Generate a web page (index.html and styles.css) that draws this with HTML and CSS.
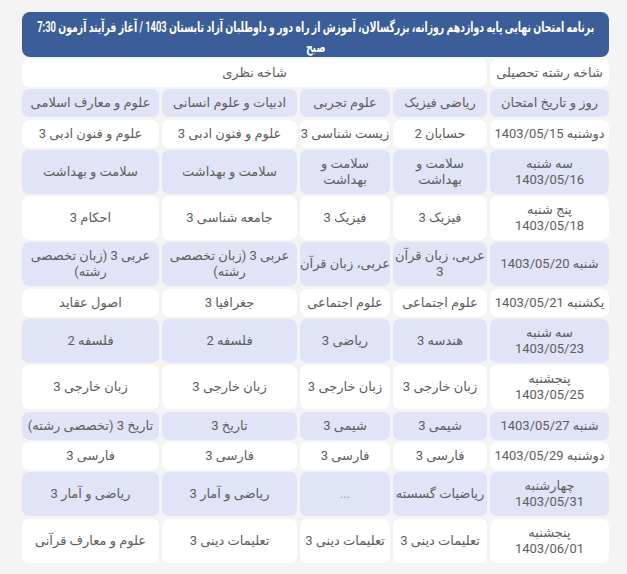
FILE: index.html
```html
<!DOCTYPE html>
<html lang="fa" dir="rtl">
<head>
<meta charset="utf-8">
<title>برنامه امتحان نهایی</title>
<link rel="stylesheet" href="styles.css">
</head>
<body>
<div class="wrap">
  <div class="title">
    <span class="tline">برنامه امتحان نهایی پایه دوازدهم روزانه، بزرگسالان، آموزش از راه دور و داوطلبان آزاد تابستان 1403 / آغاز فرآیند آزمون 7:30</span>
    <span class="tline">صبح</span>
  </div>
  <div class="grid">
    <div class="cell w">شاخه رشته تحصیلی</div>
    <div class="cell w span4">شاخه نظری</div>

    <div class="cell p">روز و تاریخ امتحان</div>
    <div class="cell p">ریاضی فیزیک</div>
    <div class="cell p">علوم تجربی</div>
    <div class="cell p">ادبیات و علوم انسانی</div>
    <div class="cell p">علوم و معارف اسلامی</div>

    <div class="cell w">دوشنبه 1403/05/15</div>
    <div class="cell w">حسابان 2</div>
    <div class="cell w">زیست شناسی 3</div>
    <div class="cell w">علوم و فنون ادبی 3</div>
    <div class="cell w">علوم و فنون ادبی 3</div>

    <div class="cell p">سه شنبه<br>1403/05/16</div>
    <div class="cell p">سلامت و<br>بهداشت</div>
    <div class="cell p">سلامت و<br>بهداشت</div>
    <div class="cell p">سلامت و بهداشت</div>
    <div class="cell p">سلامت و بهداشت</div>

    <div class="cell w">پنج شنبه<br>1403/05/18</div>
    <div class="cell w">فیزیک 3</div>
    <div class="cell w">فیزیک 3</div>
    <div class="cell w">جامعه شناسی 3</div>
    <div class="cell w">احکام 3</div>

    <div class="cell p">شنبه 1403/05/20</div>
    <div class="cell p">عربی، زبان قرآن<br>3</div>
    <div class="cell p">عربی، زبان قرآن</div>
    <div class="cell p">عربی 3 (زبان تخصصی<br>رشته)</div>
    <div class="cell p">عربی 3 (زبان تخصصی<br>رشته)</div>

    <div class="cell w">یکشنبه 1403/05/21</div>
    <div class="cell w">علوم اجتماعی</div>
    <div class="cell w">علوم اجتماعی</div>
    <div class="cell w">جغرافیا 3</div>
    <div class="cell w">اصول عقاید</div>

    <div class="cell p">سه شنبه<br>1403/05/23</div>
    <div class="cell p">هندسه 3</div>
    <div class="cell p">ریاضی 3</div>
    <div class="cell p">فلسفه 2</div>
    <div class="cell p">فلسفه 2</div>

    <div class="cell w">پنجشنبه<br>1403/05/25</div>
    <div class="cell w">زبان خارجی 3</div>
    <div class="cell w">زبان خارجی 3</div>
    <div class="cell w">زبان خارجی 3</div>
    <div class="cell w">زبان خارجی 3</div>

    <div class="cell p">شنبه 1403/05/27</div>
    <div class="cell p">شیمی 3</div>
    <div class="cell p">شیمی 3</div>
    <div class="cell p">تاریخ 3</div>
    <div class="cell p">تاریخ 3 (تخصصی رشته)</div>

    <div class="cell w">دوشنبه 1403/05/29</div>
    <div class="cell w">فارسی 3</div>
    <div class="cell w">فارسی 3</div>
    <div class="cell w">فارسی 3</div>
    <div class="cell w">فارسی 3</div>

    <div class="cell p">چهارشنبه<br>1403/05/31</div>
    <div class="cell p">ریاضیات گسسته</div>
    <div class="cell p muted">...</div>
    <div class="cell p">ریاضی و آمار 3</div>
    <div class="cell p">ریاضی و آمار 3</div>

    <div class="cell w">پنجشنبه<br>1403/06/01</div>
    <div class="cell w">تعلیمات دینی 3</div>
    <div class="cell w">تعلیمات دینی 3</div>
    <div class="cell w">تعلیمات دینی 3</div>
    <div class="cell w">علوم و معارف قرآنی</div>
  </div>
</div>
</body>
</html>
```

FILE: styles.css
```css
html, body {
  margin: 0;
  padding: 0;
  background: #f4f4f5;
}
body {
  font-family: Roboto, "DejaVu Sans", sans-serif;
  direction: rtl;
}
.wrap {
  width: 587px;
  margin: 12px 18px 0 auto;
}
.title {
  background: #3b5e98;
  color: #ffffff;
  font-weight: bold;
  font-size: 14px;
  line-height: 20px;
  padding: 5px 0 0;
  height: 40px;
  border-radius: 8px;
  display: flex;
  flex-direction: column;
  align-items: center;
  overflow: hidden;
}
.tline {
  display: block;
  white-space: nowrap;
  transform: scaleX(0.665);
  transform-origin: center;
}
.grid {
  margin-top: 2px;
  display: grid;
  grid-template-columns: 119px 94px 90px 135px 137px;
  column-gap: 3px;
  row-gap: 2.3px;
}
.cell {
  display: flex;
  align-items: center;
  justify-content: center;
  text-align: center;
  padding: 6px 3px;
  line-height: 16px;
  font-size: 13px;
  color: #5e5e5e;
  border-radius: 7px;
  white-space: nowrap;
}
.w { background: #ffffff; }
.p { background: #e1e3f7; }
.span4 { grid-column: span 4; }
.muted { color: #9a9aa6; }
```
